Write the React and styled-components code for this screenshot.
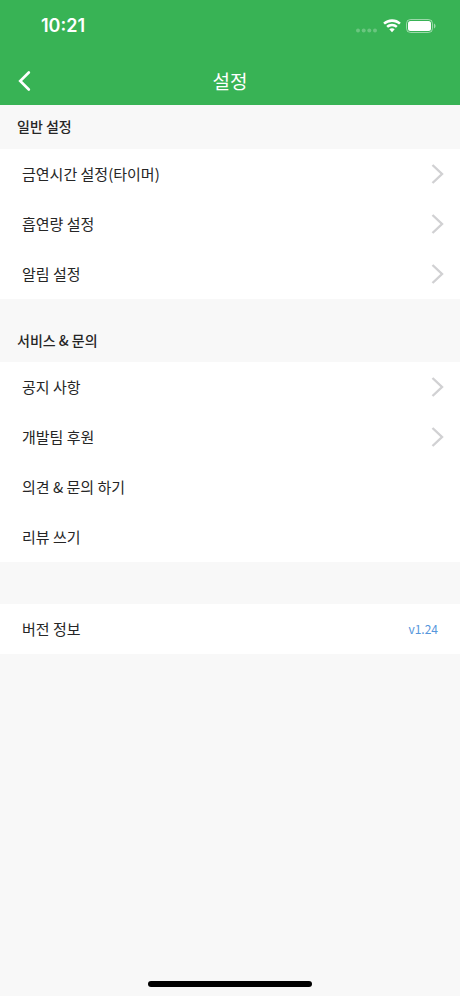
import React from "react";
import styled, { createGlobalStyle } from "styled-components";

const GlobalStyle = createGlobalStyle`
  * { box-sizing: border-box; }
  body {
    margin: 0;
    background: #f8f8f8;
    color: #262626;
    font-family: "Noto Sans CJK KR", sans-serif;
  }
`;

const Screen = styled.div`
  min-height: 100vh;
  display: flex;
  flex-direction: column;
`;

const Header = styled.header`
  background: #38b355;
  color: #fff;
`;

const StatusBar = styled.div`
  height: 56px;
  padding: 0 24px 4px 41px;
  display: flex;
  align-items: center;
  justify-content: space-between;
`;

const Clock = styled.time`
  font: 600 18px/24px Inter, sans-serif;
`;

const StatusIcons = styled.div`
  display: flex;
  align-items: center;
  gap: 5px;
`;

const NavBar = styled.div`
  height: 49px;
  display: grid;
  grid-template-columns: 48px 1fr 48px;
  align-items: center;
`;

const BackButton = styled.button`
  height: 48px;
  padding: 0 0 0 18px;
  border: 0;
  background: none;
  color: inherit;
  display: flex;
  align-items: center;
`;

const Title = styled.h1`
  margin: 0;
  font-size: 19px;
  line-height: 28px;
  font-weight: 400;
  text-align: center;
`;

const Main = styled.main`
  flex: 1;
`;

const SectionTitle = styled.h2`
  margin: 0;
  padding: ${(p) => (p.$spaced ? "31px 17px 12px" : "11px 17px 13px")};
  font-size: 14px;
  line-height: 20px;
  font-weight: 500;
`;

const List = styled.ul`
  margin: ${(p) => (p.$spaced ? "42px" : "0")} 0 0;
  padding: 0;
  list-style: none;
  background: #fff;
`;

const Row = styled.button`
  width: 100%;
  height: 50px;
  padding: 0 16px 0 22px;
  border: 0;
  background: none;
  color: inherit;
  font: 400 15px/22px "Noto Sans CJK KR", sans-serif;
  text-align: left;
  display: flex;
  align-items: center;
  justify-content: space-between;
`;

const Version = styled.span`
  padding-right: 6px;
  color: #5596dc;
  font-size: 12px;
`;

const Footer = styled.footer`
  padding: 8px 0 9px;
  display: flex;
  justify-content: center;
`;

const HomeIndicator = styled.div`
  width: 164px;
  height: 6px;
  border-radius: 3px;
  background: #000;
`;

const Chevron = () => (
  <svg width="13" height="20" viewBox="0 0 13 20" fill="none" stroke="#d1d1d3" strokeWidth="2.4" aria-hidden="true">
    <path d="M1.500 1 L11 10 L1.500 19" />
  </svg>
);

const BackIcon = () => (
  <svg width="13" height="20" viewBox="0 0 13 20" fill="none" stroke="#fff" strokeWidth="2.6" strokeLinecap="round" aria-hidden="true">
    <path d="M10.800 1.500 L2.200 10 L10.800 18.500" />
  </svg>
);

const SignalIcon = () => (
  <svg width="22" height="14" viewBox="0 0 22 14" fill="#fff" fillOpacity="0.25" aria-hidden="true">
    <circle cx="2" cy="11.500" r="2" />
    <circle cx="7.700" cy="11.500" r="2" />
    <circle cx="13.300" cy="11.500" r="2" />
    <circle cx="19" cy="11.500" r="2" />
  </svg>
);

const WifiIcon = () => (
  <svg width="18" height="14" viewBox="0 0 18 14" fill="#fff" aria-hidden="true">
    <path d="M9 .3C5.600.3 2.500 1.500.2 3.700l1.700 1.900A10.300 10.300 0 0 1 9 2.900c2.700 0 5.200 1 7.100 2.700l1.700-1.900A12.800 12.800 0 0 0 9 .3Z" />
    <path d="M9 4.700c-2.200 0-4.200.8-5.700 2.200L5 8.800a5.900 5.900 0 0 1 8 0l1.700-1.900A8.400 8.400 0 0 0 9 4.700Z" />
    <path d="M9 9.200a3.900 3.900 0 0 0-2.700 1.100L9 13.300l2.700-3A3.900 3.900 0 0 0 9 9.200Z" />
  </svg>
);

const BatteryIcon = () => (
  <svg width="30" height="14" viewBox="0 0 30 14" aria-hidden="true">
    <rect x=".5" y=".5" width="26" height="13" rx="4" fill="none" stroke="#fff" strokeOpacity=".5" />
    <rect x="2" y="2" width="23" height="10" rx="2.500" fill="#fff" />
    <path d="M28 4.500c2 .8 2 4.200 0 5Z" fill="#fff" fillOpacity=".5" />
  </svg>
);

const SECTIONS = [
  {
    title: "일반 설정",
    rows: [
      { label: "금연시간 설정(타이머)", chevron: true },
      { label: "흡연량 설정", chevron: true },
      { label: "알림 설정", chevron: true },
    ],
  },
  {
    title: "서비스 & 문의",
    rows: [
      { label: "공지 사항", chevron: true },
      { label: "개발팀 후원", chevron: true },
      { label: "의견 & 문의 하기" },
      { label: "리뷰 쓰기" },
    ],
  },
  { rows: [{ label: "버전 정보", version: "v1.24" }] },
];

export default function App() {
  return (
    <Screen>
      <GlobalStyle />
      <Header>
        <StatusBar>
          <Clock>10:21</Clock>
          <StatusIcons>
            <SignalIcon />
            <WifiIcon />
            <BatteryIcon />
          </StatusIcons>
        </StatusBar>
        <NavBar>
          <BackButton type="button" aria-label="뒤로">
            <BackIcon />
          </BackButton>
          <Title>설정</Title>
        </NavBar>
      </Header>
      <Main>
        {SECTIONS.map((section, i) => (
          <section key={i}>
            {section.title && <SectionTitle $spaced={i > 0}>{section.title}</SectionTitle>}
            <List $spaced={!section.title}>
              {section.rows.map((row) => (
                <li key={row.label}>
                  <Row type="button">
                    {row.label}
                    {row.chevron && <Chevron />}
                    {row.version && <Version>{row.version}</Version>}
                  </Row>
                </li>
              ))}
            </List>
          </section>
        ))}
      </Main>
      <Footer>
        <HomeIndicator />
      </Footer>
    </Screen>
  );
}
